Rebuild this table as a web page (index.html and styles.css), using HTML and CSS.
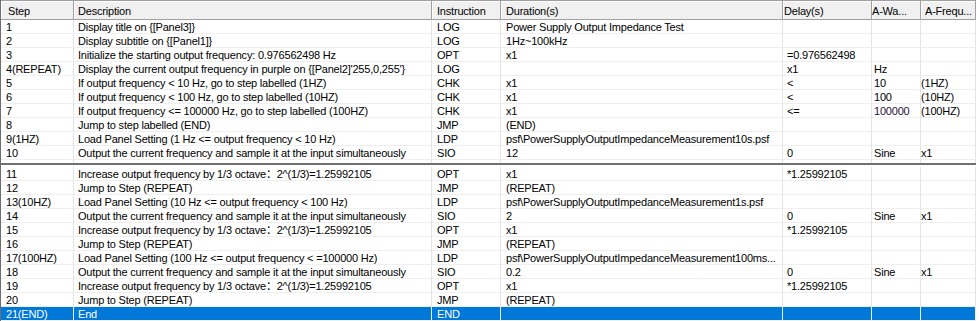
FILE: index.html
```html
<!DOCTYPE html>
<html>
<head>
<meta charset="utf-8">
<link rel="stylesheet" href="styles.css">
</head>
<body>
<div class="grid">
  <div class="row head">
    <div class="c c1">Step</div>
    <div class="c c2">Description</div>
    <div class="c c3">Instruction</div>
    <div class="c c4">Duration(s)</div>
    <div class="c c5">Delay(s)</div>
    <div class="c c6">A-Wa...</div>
    <div class="c c7">A-Frequ...</div>
  </div>
  <div class="row"><div class="c c1">1</div><div class="c c2">Display title on {[Panel3]}</div><div class="c c3">LOG</div><div class="c c4">Power Supply Output Impedance Test</div><div class="c c5"></div><div class="c c6"></div><div class="c c7"></div></div>
  <div class="row"><div class="c c1">2</div><div class="c c2">Display subtitle on {[Panel1]}</div><div class="c c3">LOG</div><div class="c c4">1Hz~100kHz</div><div class="c c5"></div><div class="c c6"></div><div class="c c7"></div></div>
  <div class="row"><div class="c c1">3</div><div class="c c2">Initialize the starting output frequency: 0.976562498 Hz</div><div class="c c3">OPT</div><div class="c c4">x1</div><div class="c c5">=0.976562498</div><div class="c c6"></div><div class="c c7"></div></div>
  <div class="row"><div class="c c1">4(REPEAT)</div><div class="c c2">Display the current output frequency in purple on {[Panel2]'255,0,255'}</div><div class="c c3">LOG</div><div class="c c4"></div><div class="c c5">x1</div><div class="c c6">Hz</div><div class="c c7"></div></div>
  <div class="row"><div class="c c1">5</div><div class="c c2">If output frequency &lt; 10 Hz, go to step labelled (1HZ)</div><div class="c c3">CHK</div><div class="c c4">x1</div><div class="c c5">&lt;</div><div class="c c6">10</div><div class="c c7">(1HZ)</div></div>
  <div class="row"><div class="c c1">6</div><div class="c c2">If output frequency &lt; 100 Hz, go to step labelled (10HZ)</div><div class="c c3">CHK</div><div class="c c4">x1</div><div class="c c5">&lt;</div><div class="c c6">100</div><div class="c c7">(10HZ)</div></div>
  <div class="row"><div class="c c1">7</div><div class="c c2">If output frequency &lt;= 100000 Hz, go to step labelled (100HZ)</div><div class="c c3">CHK</div><div class="c c4">x1</div><div class="c c5">&lt;=</div><div class="c c6 purple">100000</div><div class="c c7">(100HZ)</div></div>
  <div class="row"><div class="c c1">8</div><div class="c c2">Jump to step labelled (END)</div><div class="c c3">JMP</div><div class="c c4">(END)</div><div class="c c5"></div><div class="c c6"></div><div class="c c7"></div></div>
  <div class="row"><div class="c c1">9(1HZ)</div><div class="c c2">Load Panel Setting (1 Hz &lt;= output frequency &lt; 10 Hz)</div><div class="c c3">LDP</div><div class="c c4">psf\PowerSupplyOutputImpedanceMeasurement10s.psf</div><div class="c c5"></div><div class="c c6"></div><div class="c c7"></div></div>
  <div class="row"><div class="c c1">10</div><div class="c c2">Output the current frequency and sample it at the input simultaneously</div><div class="c c3">SIO</div><div class="c c4">12</div><div class="c c5">0</div><div class="c c6">Sine</div><div class="c c7">x1</div></div>
  <div class="row gap"><div class="c c1"></div><div class="c c2"></div><div class="c c3"></div><div class="c c4"></div><div class="c c5"></div><div class="c c6"></div><div class="c c7"></div></div>
  <div class="frozen"></div>
  <div class="row"><div class="c c1">11</div><div class="c c2">Increase output frequency by 1/3 octave：2^(1/3)=1.25992105</div><div class="c c3">OPT</div><div class="c c4">x1</div><div class="c c5">*1.25992105</div><div class="c c6"></div><div class="c c7"></div></div>
  <div class="row"><div class="c c1">12</div><div class="c c2">Jump to Step (REPEAT)</div><div class="c c3">JMP</div><div class="c c4">(REPEAT)</div><div class="c c5"></div><div class="c c6"></div><div class="c c7"></div></div>
  <div class="row"><div class="c c1">13(10HZ)</div><div class="c c2">Load Panel Setting (10 Hz &lt;= output frequency &lt; 100 Hz)</div><div class="c c3">LDP</div><div class="c c4">psf\PowerSupplyOutputImpedanceMeasurement1s.psf</div><div class="c c5"></div><div class="c c6"></div><div class="c c7"></div></div>
  <div class="row"><div class="c c1">14</div><div class="c c2">Output the current frequency and sample it at the input simultaneously</div><div class="c c3">SIO</div><div class="c c4">2</div><div class="c c5">0</div><div class="c c6">Sine</div><div class="c c7">x1</div></div>
  <div class="row"><div class="c c1">15</div><div class="c c2">Increase output frequency by 1/3 octave：2^(1/3)=1.25992105</div><div class="c c3">OPT</div><div class="c c4">x1</div><div class="c c5">*1.25992105</div><div class="c c6"></div><div class="c c7"></div></div>
  <div class="row"><div class="c c1">16</div><div class="c c2">Jump to Step (REPEAT)</div><div class="c c3">JMP</div><div class="c c4">(REPEAT)</div><div class="c c5"></div><div class="c c6"></div><div class="c c7"></div></div>
  <div class="row"><div class="c c1">17(100HZ)</div><div class="c c2">Load Panel Setting (100 Hz &lt;= output frequency &lt; =100000 Hz)</div><div class="c c3">LDP</div><div class="c c4">psf\PowerSupplyOutputImpedanceMeasurement100ms...</div><div class="c c5"></div><div class="c c6"></div><div class="c c7"></div></div>
  <div class="row"><div class="c c1">18</div><div class="c c2">Output the current frequency and sample it at the input simultaneously</div><div class="c c3">SIO</div><div class="c c4">0.2</div><div class="c c5">0</div><div class="c c6">Sine</div><div class="c c7">x1</div></div>
  <div class="row"><div class="c c1">19</div><div class="c c2">Increase output frequency by 1/3 octave：2^(1/3)=1.25992105</div><div class="c c3">OPT</div><div class="c c4">x1</div><div class="c c5">*1.25992105</div><div class="c c6"></div><div class="c c7"></div></div>
  <div class="row"><div class="c c1">20</div><div class="c c2">Jump to Step (REPEAT)</div><div class="c c3">JMP</div><div class="c c4">(REPEAT)</div><div class="c c5"></div><div class="c c6"></div><div class="c c7"></div></div>
  <div class="row sel"><div class="c c1">21(END)</div><div class="c c2">End</div><div class="c c3">END</div><div class="c c4"></div><div class="c c5"></div><div class="c c6"></div><div class="c c7"></div></div>
</div>
</body>
</html>
```
FILE: styles.css
```css
html, body {
  margin: 0;
  padding: 0;
  background: #ffffff;
}
.grid {
  width: 979px;
  height: 321px;
  overflow: hidden;
  box-sizing: border-box;
  border-left: 1px solid #6e6e6e;
  background: #ffffff;
  font-family: "Liberation Sans", Arial, "Noto Sans CJK SC", sans-serif;
  font-size: 11px;
  letter-spacing: -0.2px;
  color: #000000;
}
.row {
  display: grid;
  grid-template-columns: 73px 358px 69px 282px 89px 49px 55px;
  height: 14px;
}
.c {
  box-sizing: border-box;
  height: 14px;
  border-right: 1px solid #e4e4e4;
  border-bottom: 1px solid #efefef;
  line-height: 15px;
  white-space: nowrap;
  padding-left: 5px;
}
.c1 { padding-left: 5px; }
.c2 { padding-left: 4px; }
.c3 { padding-left: 5px; }
.c4 { padding-left: 5px; overflow: hidden; }
.c5 { padding-left: 4px; }
.c6 { padding-left: 2px; }
.c7 { padding-left: 0; }

.head {
  height: 20px;
}
.head .c {
  height: 20px;
  background: #f0f0f0;
  border-top: 1px solid #a0a0a0;
  border-right: 1px solid #a0a0a0;
  border-bottom: 1px solid #a0a0a0;
  box-shadow: inset 1px 1px 0 #ffffff;
  line-height: 20px;
  padding-top: 0;
}
.head .c1 { padding-left: 7px; }
.head .c2 { padding-left: 4px; }
.head .c3 { padding-left: 5px; }
.head .c4 { padding-left: 5px; }
.head .c5 { padding-left: 1px; }
.head .c6 { padding-left: 0; }
.head .c7 { padding-left: 4px; }

.gap {
  height: 3px;
}
.gap .c {
  height: 3px;
  border-bottom: none;
}
.frozen {
  height: 2px;
  width: 975px;
  background: #707070;
  margin-bottom: 2px;
}
.purple {
  color: #2a1238;
}
.sel .c {
  background: #0078d7;
  color: #ffffff;
  border-right-color: #e8f2fb;
}
```
